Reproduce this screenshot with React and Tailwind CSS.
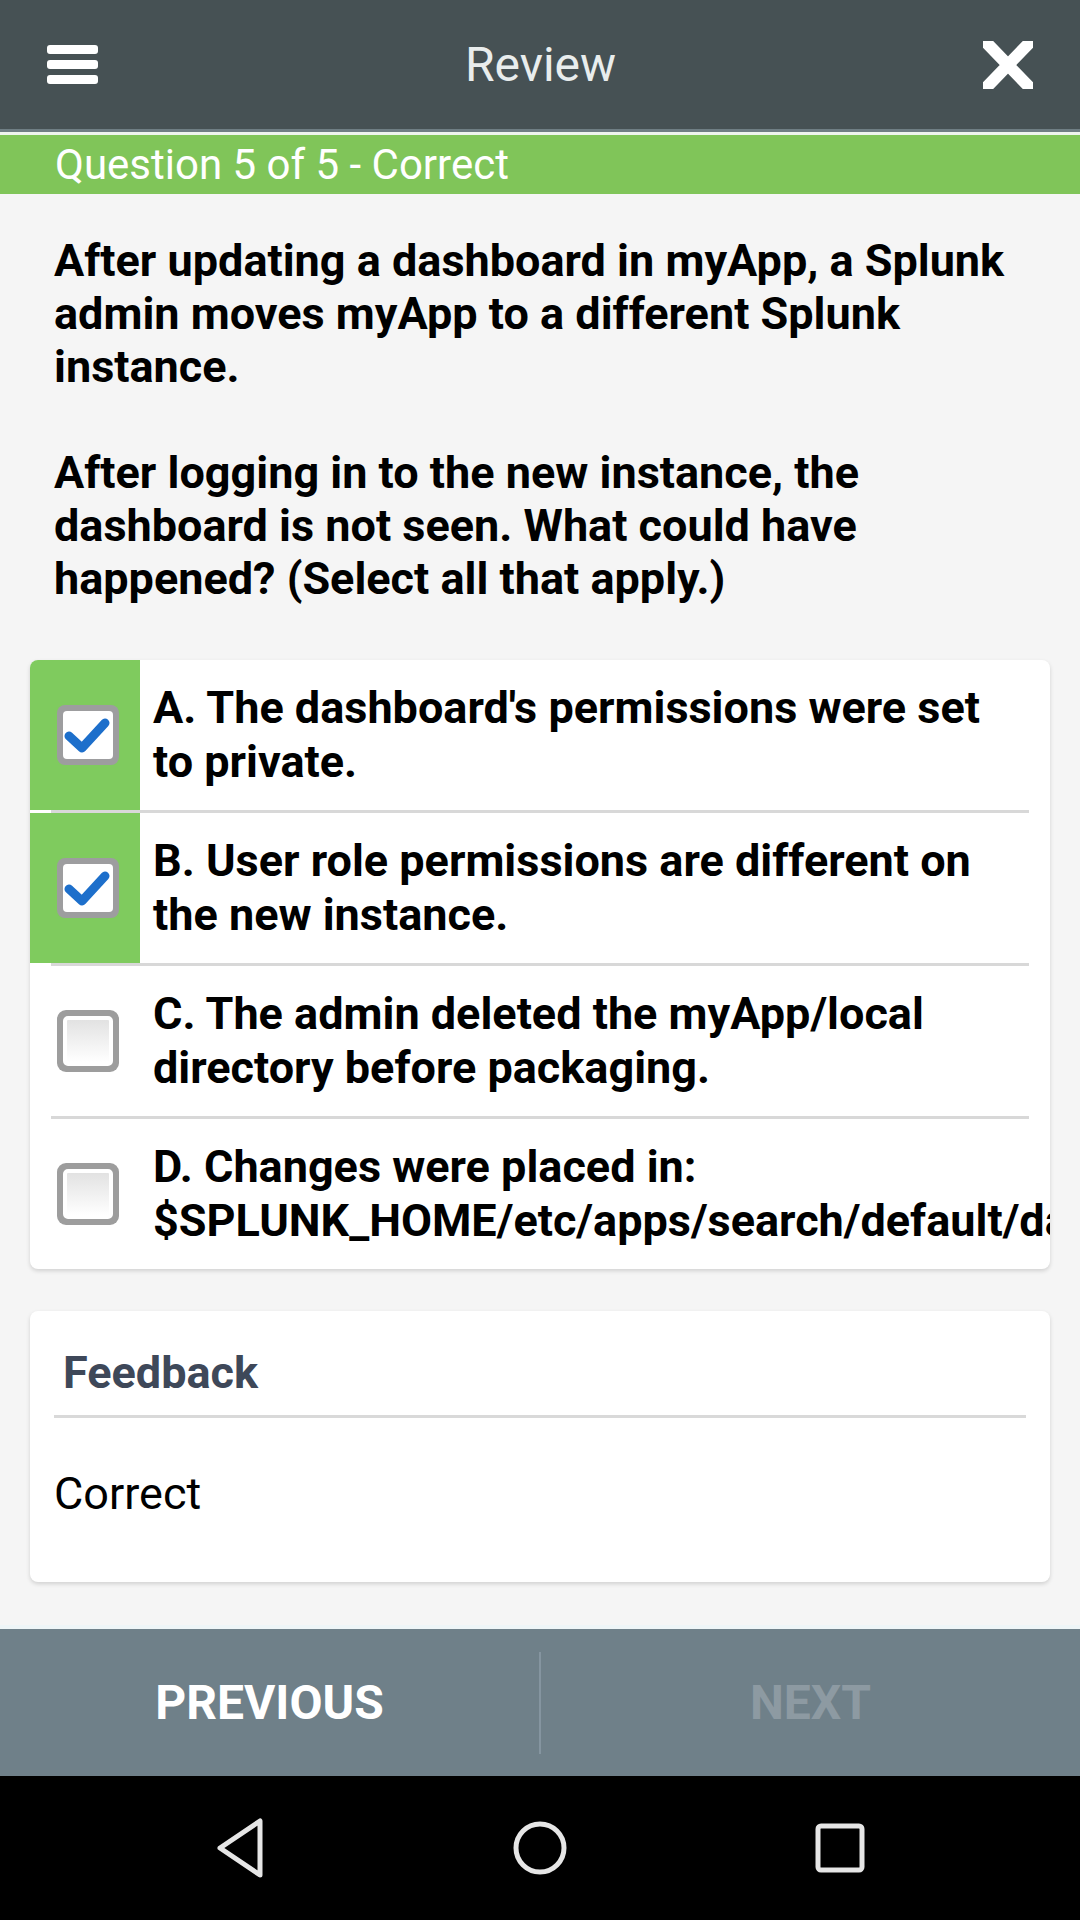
import React from "react";

const options = [
  { label: "A. The dashboard's permissions were set to private.", checked: true },
  { label: "B. User role permissions are different on the new instance.", checked: true },
  { label: "C. The admin deleted the myApp/local directory before packaging.", checked: false },
  { label: "D. Changes were placed in: $SPLUNK_HOME/etc/apps/search/default/data/ui/views", checked: false },
];

function CheckBox({ checked }) {
  if (checked) {
    return (
      <div className="w-[62px] h-[60px] rounded-[8px] bg-[#9d9d9f] p-[6px]">
        <div className="w-full h-full rounded-[4px] bg-white flex items-center justify-center">
          <svg width="50" height="48" viewBox="0 0 50 48">
            <path d="M6 25 L19 37 L42 12" fill="none" stroke="#1d6fcb" strokeWidth="9" strokeLinecap="round" strokeLinejoin="round" />
          </svg>
        </div>
      </div>
    );
  }
  return (
    <div className="w-[62px] h-[62px] rounded-[9px] bg-[#9d9d9d] p-[6px]">
      <div className="w-full h-full rounded-[5px] border-[4px] border-white bg-gradient-to-b from-[#e2e2e2] to-white"></div>
    </div>
  );
}

function OptionRow({ option }) {
  return (
    <div className="flex h-[150px]">
      <div className={`w-[110px] shrink-0 flex items-center justify-center pl-[6px] ${option.checked ? "bg-[#7fcb5e]" : ""}`}>
        <CheckBox checked={option.checked} />
      </div>
      <div className="flex-1 min-w-0 flex items-center pl-[13px] pr-[26px]">
        <p className="text-[45px] leading-[54px] font-bold text-black">{option.label}</p>
      </div>
    </div>
  );
}

export default function App() {
  return (
    <div className="w-[1080px] h-[1920px] bg-[#f5f5f5] flex flex-col overflow-hidden" style={{ fontFamily: "Roboto, 'Noto Sans', sans-serif" }}>
      {/* top bar */}
      <div className="h-[129px] bg-[#465154] flex items-center justify-between pl-[47px] pr-[47px] shrink-0">
        <div className="w-[51px] flex flex-col gap-[6px]">
          <div className="h-[9px] rounded-[3px] bg-white"></div>
          <div className="h-[9px] rounded-[3px] bg-white"></div>
          <div className="h-[9px] rounded-[3px] bg-white"></div>
        </div>
        <h1 className="text-[48px] text-[#e9eded] font-normal">Review</h1>
        <svg width="50" height="48" viewBox="0 0 50 48" className="overflow-hidden">
          <path d="M-2 -4 L52 52 M52 -4 L-2 52" stroke="white" strokeWidth="12" />
        </svg>
      </div>
      <div className="h-[3px] bg-[#6f7e84] shrink-0"></div>
      <div className="h-[3px] bg-[#eef4ee] shrink-0"></div>
      <div className="h-[59px] bg-[#80c559] flex items-center px-[55px] shrink-0">
        <span className="text-[42px] text-white leading-none">Question 5 of 5 - Correct</span>
      </div>

      {/* question */}
      <div className="pt-[40px] pl-[54px] pr-[30px] text-[45px] leading-[53px] font-bold text-black">
        <p>After updating a dashboard in myApp, a Splunk admin moves myApp to a different Splunk instance.</p>
        <p className="mt-[53px]">After logging in to the new instance, the dashboard is not seen. What could have happened? (Select all that apply.)</p>
      </div>

      {/* options */}
      <div className="mx-[30px] mt-[55px] bg-white rounded-[8px] overflow-hidden shadow-[0_2px_4px_rgba(0,0,0,0.15)] shrink-0">
        {options.map((o, i) => (
          <div key={i}>
            {i > 0 && (
              <div className="px-[21px]">
                <div className="h-[3px] bg-[#d8d8d8]"></div>
              </div>
            )}
            <OptionRow option={o} />
          </div>
        ))}
      </div>

      {/* feedback */}
      <div className="mx-[30px] mt-[42px] bg-white rounded-[8px] shadow-[0_2px_4px_rgba(0,0,0,0.15)] px-[24px] pt-[37px] pb-[63px] shrink-0">
        <h2 className="pl-[9px] text-[45px] leading-[50px] font-bold text-[#3e4859]">Feedback</h2>
        <div className="mt-[17px] h-[3px] bg-[#d9d9d9]"></div>
        <p className="mt-[51px] text-[45px] leading-[50px] text-black">Correct</p>
      </div>

      <div className="flex-1"></div>

      {/* bottom nav */}
      <div className="h-[4px] bg-[#eef5f7] shrink-0"></div>
      <div className="h-[147px] bg-[#6f8089] flex items-center shrink-0">
        <button className="flex-1 h-full flex items-center justify-center text-[48px] font-bold text-white">PREVIOUS</button>
        <div className="w-[2px] h-[102px] bg-[#8595a0]"></div>
        <button className="flex-1 h-full flex items-center justify-center text-[48px] font-bold text-[#8d9aa2]">NEXT</button>
      </div>

      {/* android nav */}
      <div className="h-[144px] bg-black flex items-center justify-center shrink-0">
        <div className="w-[300px] flex justify-center">
          <svg width="52" height="60" viewBox="0 0 52 60">
            <path d="M46 3 L46 57 L6 30 Z" fill="none" stroke="#e6e6e6" strokeWidth="5" strokeLinejoin="round" />
          </svg>
        </div>
        <div className="w-[300px] flex justify-center">
          <svg width="56" height="56" viewBox="0 0 56 56">
            <circle cx="28" cy="28" r="24" fill="none" stroke="#e6e6e6" strokeWidth="5" />
          </svg>
        </div>
        <div className="w-[300px] flex justify-center">
          <svg width="50" height="50" viewBox="0 0 50 50">
            <rect x="3" y="3" width="44" height="44" rx="3" fill="none" stroke="#e6e6e6" strokeWidth="5" />
          </svg>
        </div>
      </div>
    </div>
  );
}
